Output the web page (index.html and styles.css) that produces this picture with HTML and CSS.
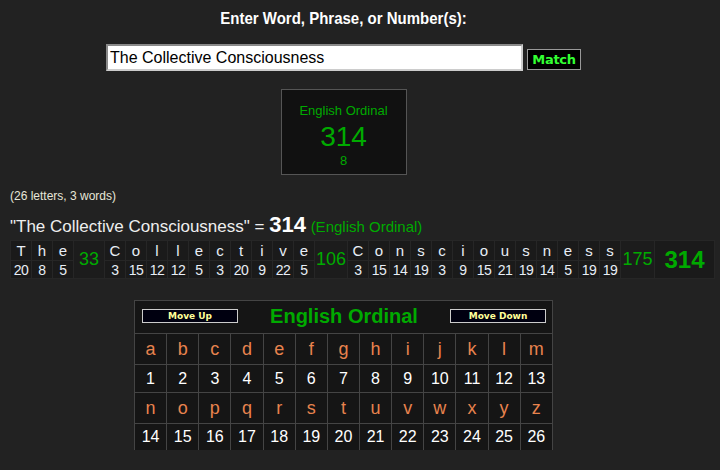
FILE: index.html
```html
<!DOCTYPE html>
<html lang="en">
<head>
    <meta charset="UTF-8">
    <meta name="viewport" content="width=device-width, initial-scale=1.0">
    <title>Gematria Calculator</title>
    <link rel="stylesheet" href="styles.css">
</head>
<body>
    <div class="top">
        <h3 class="prompt">Enter Word, Phrase, or Number(s):</h3>
        <form class="search" onsubmit="return false">
            <input type="text" class="search-input" value="The Collective Consciousness">
            <button type="submit" class="match-btn">Match</button>
        </form>
        <div class="result-box">
            <div class="result-name">English Ordinal</div>
            <div class="result-value">314</div>
            <div class="result-reduced">8</div>
        </div>
    </div>

    <p class="count">(26 letters, 3 words)</p>
    <p class="phrase">"The Collective Consciousness" = <b class="phrase-total">314</b> <span class="phrase-cipher">(English Ordinal)</span></p>

    <table class="breakdown">
        <tr class="letters">
            <td>T</td><td>h</td><td>e</td>
            <td class="word-sum" rowspan="2">33</td>
            <td>C</td><td>o</td><td>l</td><td>l</td><td>e</td><td>c</td><td>t</td><td>i</td><td>v</td><td>e</td>
            <td class="word-sum wide" rowspan="2">106</td>
            <td>C</td><td>o</td><td>n</td><td>s</td><td>c</td><td>i</td><td>o</td><td>u</td><td>s</td><td>n</td><td>e</td><td>s</td><td>s</td>
            <td class="word-sum wider" rowspan="2">175</td>
            <td class="grand-sum" rowspan="2">314</td>
        </tr>
        <tr class="values">
            <td>20</td><td>8</td><td>5</td>
            <td>3</td><td>15</td><td>12</td><td>12</td><td>5</td><td>3</td><td>20</td><td>9</td><td>22</td><td>5</td>
            <td>3</td><td>15</td><td>14</td><td>19</td><td>3</td><td>9</td><td>15</td><td>21</td><td>19</td><td>14</td><td>5</td><td>19</td><td>19</td>
        </tr>
    </table>

    <div class="chart-wrap">
        <table class="chart">
            <tr class="chart-head">
                <td colspan="13">
                    <div class="chart-bar">
                        <button class="move-btn">Move Up</button>
                        <span class="chart-title">English Ordinal</span>
                        <button class="move-btn">Move Down</button>
                    </div>
                </td>
            </tr>
            <tr class="chart-letters">
                <td>a</td><td>b</td><td>c</td><td>d</td><td>e</td><td>f</td><td>g</td><td>h</td><td>i</td><td>j</td><td>k</td><td>l</td><td>m</td>
            </tr>
            <tr class="chart-values">
                <td>1</td><td>2</td><td>3</td><td>4</td><td>5</td><td>6</td><td>7</td><td>8</td><td>9</td><td>10</td><td>11</td><td>12</td><td>13</td>
            </tr>
            <tr class="chart-letters">
                <td>n</td><td>o</td><td>p</td><td>q</td><td>r</td><td>s</td><td>t</td><td>u</td><td>v</td><td>w</td><td>x</td><td>y</td><td>z</td>
            </tr>
            <tr class="chart-values last">
                <td>14</td><td>15</td><td>16</td><td>17</td><td>18</td><td>19</td><td>20</td><td>21</td><td>22</td><td>23</td><td>24</td><td>25</td><td>26</td>
            </tr>
        </table>
    </div>
</body>
</html>
```

FILE: styles.css
```css
* {
    margin: 0;
    padding: 0;
    box-sizing: border-box;
}

body {
    background: #222222;
    color: #eeeeee;
    font-family: 'Liberation Sans', Arial, sans-serif;
    overflow: hidden;
}

.top {
    width: 687px;
    text-align: center;
    padding-top: 9px;
}

.prompt {
    font-size: 15px;
    line-height: 18px;
    font-weight: bold;
    color: #ffffff;
    transform: scaleY(1.1);
}

.search {
    display: flex;
    justify-content: center;
    align-items: flex-end;
    gap: 4px;
    margin-top: 17px;
}

.search-input {
    width: 417px;
    height: 27px;
    border: 2px solid #8a8a8a;
    border-right-color: #cccccc;
    border-bottom-color: #cccccc;
    background: #ffffff;
    color: #000000;
    font-family: 'Liberation Sans', Arial, sans-serif;
    font-size: 16px;
    padding: 0 2px;
}

.match-btn {
    width: 54px;
    height: 21px;
    margin-bottom: 1px;
    background: #000000;
    border: 1px solid #999999;
    color: #33ff33;
    font-family: 'DejaVu Sans', Verdana, sans-serif;
    font-weight: bold;
    font-size: 13px;
    letter-spacing: -0.3px;
}

.result-box {
    width: 126px;
    height: 86px;
    margin: 18px auto 0;
    background: #111111;
    border: 1px solid #555555;
    color: #00aa00;
    padding-top: 13px;
}

.result-name {
    font-size: 13px;
    line-height: 16px;
}

.result-value {
    font-size: 28px;
    line-height: 30px;
    margin-top: 3px;
}

.result-reduced {
    font-size: 13px;
    line-height: 15px;
    margin-top: 1px;
}

.count {
    margin: 14px 0 0 10px;
    font-size: 12px;
    line-height: 15px;
    color: #e6e6d8;
}

.phrase {
    margin: 10px 0 0 10px;
    font-size: 17px;
    line-height: 21px;
    color: #eeeeee;
}

.phrase-total {
    font-size: 22px;
    color: #ffffff;
}

.phrase-cipher {
    font-size: 15px;
    color: #00aa00;
}

.breakdown {
    margin: 3px 0 0 10px;
    width: 702px;
    border-collapse: collapse;
    table-layout: fixed;
    background: #1a1a1a;
}

.breakdown td {
    border: 1px solid #262626;
    text-align: center;
    padding: 0;
    width: 21px;
    color: #e8eef6;
}

.letters td {
    height: 20px;
    font-size: 15px;
}

.values td {
    height: 18px;
    font-size: 14px;
    letter-spacing: -0.5px;
}

.breakdown .word-sum {
    width: 31px;
    font-size: 18px;
    letter-spacing: 0;
    color: #00aa00;
    background: #1c1c1c;
}

.breakdown .word-sum.wide {
    width: 33px;
}

.breakdown .word-sum.wider {
    width: 34px;
}

.breakdown .grand-sum {
    width: 60px;
    font-size: 24px;
    font-weight: bold;
    color: #00aa00;
}

.chart-wrap {
    width: 687px;
    margin-top: 21px;
}

.chart {
    margin: 0 auto;
    width: 419px;
    border-collapse: collapse;
    table-layout: fixed;
    background: #151515;
}

.chart td {
    border: 1px solid #444444;
    text-align: center;
    padding: 0;
}

.chart-head td {
    height: 33px;
}

.chart-bar {
    display: flex;
    justify-content: space-between;
    align-items: center;
    padding: 0 6px 2px 7px;
}

.chart-title {
    font-size: 20px;
    font-weight: bold;
    color: #00aa00;
}

.move-btn {
    width: 96px;
    height: 14px;
    background: #000010;
    border: 1px solid #cccccc;
    color: #ffff99;
    font-family: 'DejaVu Sans', Verdana, sans-serif;
    font-size: 9px;
    font-weight: bold;
    line-height: 11px;
}

.chart-letters td {
    height: 31px;
    font-size: 18px;
    color: #e8834e;
}

.chart-values td {
    height: 28px;
    font-size: 16px;
    color: #ffffff;
}

.chart-values.last td {
    height: 26px;
    border-bottom: none;
}
```
